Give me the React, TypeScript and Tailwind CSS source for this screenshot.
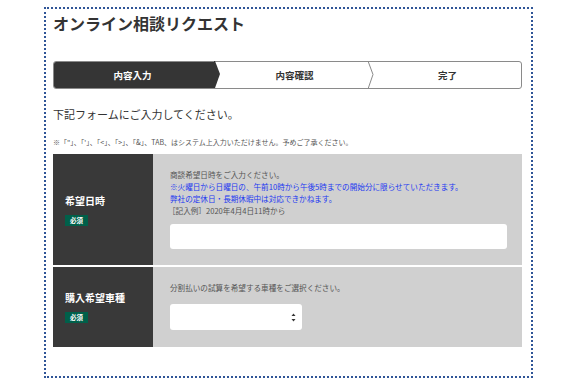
import React from "react";

const jp = { fontFamily: '"Noto Sans CJK JP", "Noto Sans", sans-serif' };

function Steps() {
  return (
    <div className="relative mt-[25px] flex h-[28px] rounded-[3px] border border-[#8a8a8a] bg-white text-[9.5px] font-bold">
      <div className="relative flex w-[161px] items-center justify-center rounded-l-[2px] bg-[#353535] pr-[4px] text-white">
        内容入力
        <svg className="absolute left-[160px] top-[-1px]" width="8" height="28" viewBox="0 0 8 28">
          <polygon points="0,0 1,0 6,13 1,27 0,27" fill="#353535" />
        </svg>
      </div>
      <div className="relative flex w-[155px] items-center justify-center pl-[4px] text-[#333]">
        内容確認
        <svg className="absolute right-[-5px] top-[-1px]" width="8" height="28" viewBox="0 0 8 28">
          <polyline points="1,0 6,13.5 1,28" fill="none" stroke="#8a8a8a" strokeWidth="1" />
        </svg>
      </div>
      <div className="flex flex-1 items-center justify-center pl-[4px] text-[#333]">完了</div>
    </div>
  );
}

function Label({ text }: { text: string }) {
  return (
    <div className="flex w-[100px] flex-col justify-center gap-[7px] bg-[#393939] pl-[12px]">
      <div className="text-[10px] leading-[14px] font-bold text-white">{text}</div>
      <div className="flex">
        <span className="bg-[#00604a] px-[5px] text-[6.5px] leading-[11px] font-bold text-white">必須</span>
      </div>
    </div>
  );
}

export default function App() {
  return (
    <div className="h-[384px] w-[576px] bg-white" style={jp}>
      <div className="ml-[44px] mt-[7px] h-[371px] w-[489px] border-2 border-dotted border-[#2f5597] pl-[7px] pr-[9px] pt-[1px]">
        <h1 className="text-[16px] leading-[26px] font-bold text-[#333]">オンライン相談リクエスト</h1>
        <Steps />
        <p className="mt-[17px] text-[11px] leading-[16px] text-[#333]">下記フォームにご入力してください。</p>
        <p className="mt-[14px] text-[7px] leading-[12px] text-[#555]">
          ※「"」、「'」、「&lt;」、「&gt;」、「&amp;」、TAB、はシステム上入力いただけません。予めご了承ください。
        </p>
        <div className="mt-[6px] flex flex-col gap-[2px]">
          <div className="flex h-[111px]">
            <Label text="希望日時" />
            <div className="flex-1 bg-[#d0d0d0] pl-[17px] pr-[15px] pt-[15px]">
              <div className="text-[7.6px] leading-[12px] text-[#555]">
                <div>商談希望日時をご入力ください。</div>
                <div className="text-[#2238f0]">※火曜日から日曜日の、午前10時から午後5時までの開始分に限らせていただきます。</div>
                <div className="text-[#2238f0]">弊社の定休日・長期休暇中は対応できかねます。</div>
                <div className="-ml-[2px]">［記入例］2020年4月4日11時から</div>
              </div>
              <div className="mt-[7px] h-[25px] rounded-[3px] bg-white" />
            </div>
          </div>
          <div className="flex h-[80px]">
            <Label text="購入希望車種" />
            <div className="flex-1 bg-[#d0d0d0] pl-[17px] pt-[15px]">
              <div className="text-[7.6px] leading-[12px] text-[#555]">分割払いの試算を希望する車種をご選択ください。</div>
              <div className="mt-[10px] flex h-[26px] w-[132px] items-center justify-end rounded-[3px] bg-white pr-[6px]">
                <svg width="5" height="9" viewBox="0 0 5 9">
                  <polygon points="2.5,0.5 4.5,3 0.5,3" fill="#333" />
                  <polygon points="2.5,8.5 4.5,6 0.5,6" fill="#333" />
                </svg>
              </div>
            </div>
          </div>
        </div>
      </div>
    </div>
  );
}
